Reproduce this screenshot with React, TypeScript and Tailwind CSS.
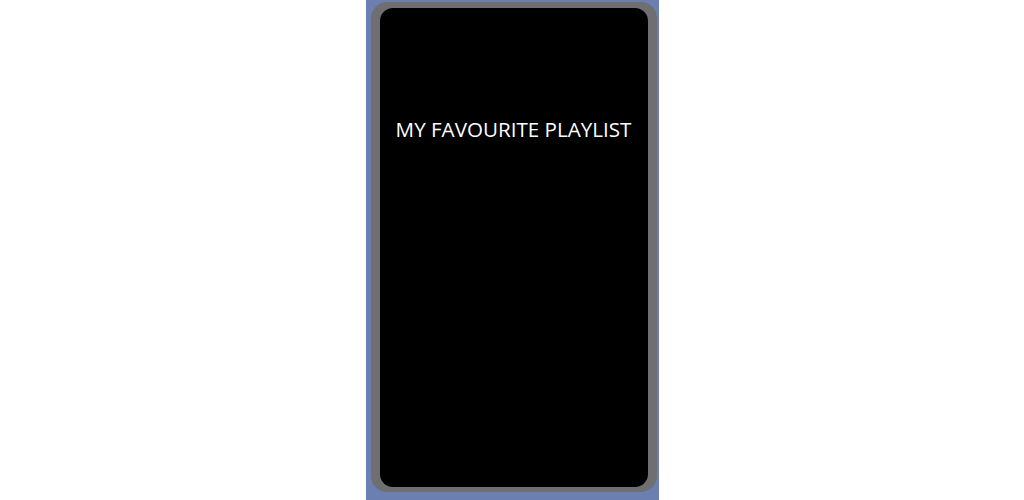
import React from 'react';

const App: React.FC = () => {
    return (
        <div className="w-full h-[500px] bg-white flex justify-center">
            <div className="w-[293px] h-[500px] bg-[#6b7fb1] pl-[5px] pr-[2px] pt-[2px] pb-[8px]">
                <div className="h-full rounded-[16px] bg-[#6f6f72] px-[9px] pt-[6px] pb-[5px]">
                    <div className="h-full rounded-[13px] bg-black flex flex-col items-center pt-[107px]">
                        <h1 className="text-white text-[20.6px] leading-[28px] font-normal font-['Open_Sans',sans-serif] tracking-normal">
                            MY FAVOURITE PLAYLIST
                        </h1>
                    </div>
                </div>
            </div>
        </div>
    );
};

export default App;
